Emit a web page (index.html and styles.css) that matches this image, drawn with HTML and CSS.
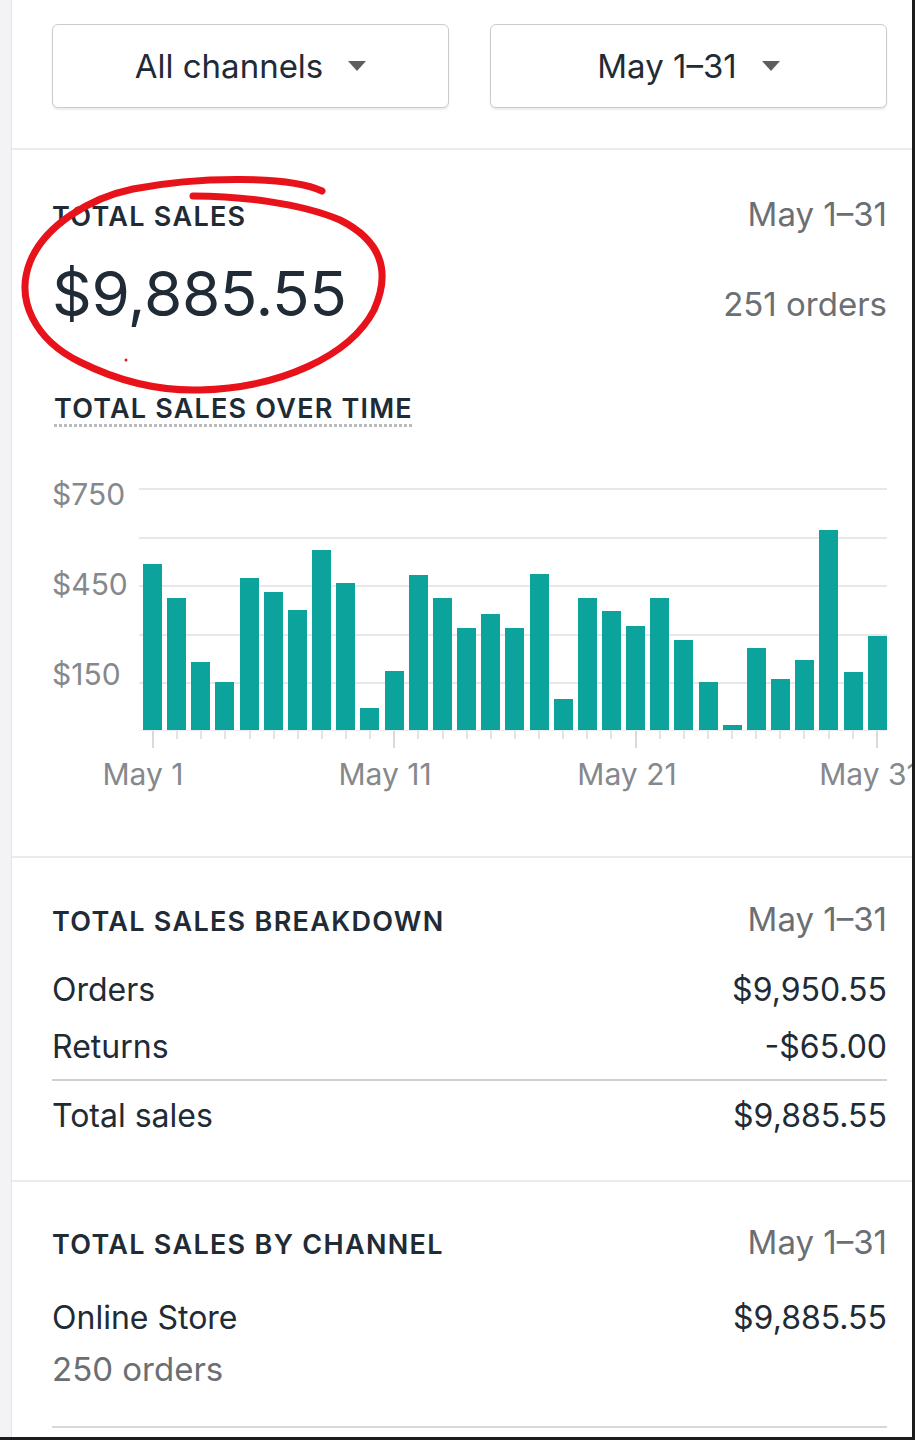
FILE: index.html
```html
<!DOCTYPE html>
<html lang="en">
<head>
<meta charset="utf-8">
<title>Total sales</title>
<link rel="stylesheet" href="styles.css">
</head>
<body>
<div class="frame">
  <div class="panel">
    <section class="filters">
      <button class="dropdown"><span>All channels</span><i class="caret"></i></button>
      <button class="dropdown"><span>May 1–31</span><i class="caret"></i></button>
    </section>

    <section class="card card-total">
      <div class="row head">
        <span class="label">TOTAL SALES</span>
        <span class="muted">May 1–31</span>
      </div>
      <div class="row big-row">
        <span class="big">$9,885.55</span>
        <span class="muted">251 orders</span>
      </div>
      <div class="over-time"><span class="label dotted">TOTAL SALES OVER TIME</span></div>

      <div class="chart">
        <div class="y-axis">
          <span>$750</span>
          <span>$450</span>
          <span>$150</span>
        </div>
        <div class="plot-wrap">
          <div class="plot">
            <div class="bars">
              <i style="height:166px"></i><i style="height:132px"></i><i style="height:68px"></i><i style="height:48px"></i><i style="height:152px"></i><i style="height:138px"></i><i style="height:120px"></i><i style="height:180px"></i><i style="height:147px"></i><i style="height:22px"></i><i style="height:59px"></i><i style="height:155px"></i><i style="height:132px"></i><i style="height:102px"></i><i style="height:116px"></i><i style="height:102px"></i><i style="height:156px"></i><i style="height:31px"></i><i style="height:132px"></i><i style="height:119px"></i><i style="height:104px"></i><i style="height:132px"></i><i style="height:90px"></i><i style="height:48px"></i><i style="height:5px"></i><i style="height:82px"></i><i style="height:51px"></i><i style="height:70px"></i><i style="height:200px"></i><i style="height:58px"></i><i style="height:94px"></i>
            </div>
          </div>
          <div class="ticks">
            <i class="major"></i><i></i><i></i><i></i><i></i><i></i><i></i><i></i><i></i><i></i><i class="major"></i><i></i><i></i><i></i><i></i><i></i><i></i><i></i><i></i><i></i><i class="major"></i><i></i><i></i><i></i><i></i><i></i><i></i><i></i><i></i><i></i><i class="major"></i>
          </div>
          <div class="x-axis">
            <span>May 1</span><span>May 11</span><span>May 21</span><span>May 31</span>
          </div>
        </div>
      </div>
    </section>

    <section class="card card-breakdown">
      <div class="row head">
        <span class="label">TOTAL SALES BREAKDOWN</span>
        <span class="muted">May 1–31</span>
      </div>
      <div class="row line first"><span>Orders</span><span>$9,950.55</span></div>
      <div class="row line"><span>Returns</span><span>-$65.00</span></div>
      <hr class="rule">
      <div class="row line total"><span>Total sales</span><span>$9,885.55</span></div>
    </section>

    <section class="card card-channel">
      <div class="row head">
        <span class="label">TOTAL SALES BY CHANNEL</span>
        <span class="muted">May 1–31</span>
      </div>
      <div class="row line first"><span>Online Store</span><span>$9,885.55</span></div>
      <div class="sub muted">250 orders</div>
      <hr class="rule rule-bottom">
    </section>
  </div>

  <svg class="scribble" width="400" height="230" viewBox="0 170 400 230" aria-hidden="true">
    <path d="M322,191 C290,176 200,176 133,189 C90,198 45,225 30,262 C15,300 35,340 80,362 C120,382 160,391 200,390 C280,388 350,356 374,310 C392,270 380,240 340,220 C300,203 240,196 193,196" fill="none" stroke="#e8121b" stroke-width="7" stroke-linecap="round"/>
    <circle cx="126" cy="360" r="1.5" fill="#e8121b"/>
  </svg>
</div>
</body>
</html>
```

FILE: styles.css
```css
* { box-sizing: border-box; }

html, body {
  margin: 0;
  padding: 0;
  background: #f3f3f5;
}

body {
  font-family: Inter, "Noto Sans", "Liberation Sans", sans-serif;
  color: #212b36;
}

.frame {
  position: relative;
  width: 915px;
  height: 1440px;
  padding-left: 11px;
  border-right: 3px solid #1c1c1c;
  border-bottom: 3px solid #1c1c1c;
  overflow: hidden;
  background: #f3f3f5;
}

.panel {
  height: 100%;
  background: #fff;
  border-left: 1px solid #e3e4e6;
}

/* filters */
.filters {
  display: grid;
  grid-template-columns: 1fr 1fr;
  column-gap: 41px;
  padding: 24px 25px 40px 40px;
  border-bottom: 2px solid #ebebed;
}

.dropdown {
  height: 84px;
  display: flex;
  align-items: center;
  justify-content: center;
  gap: 25px;
  background: #fff;
  border: 1px solid #c9cbce;
  border-radius: 6px;
  box-shadow: 0 2px 2px rgba(0, 0, 0, 0.08);
  font-family: inherit;
  font-size: 33px;
  color: #212b36;
  padding: 0;
}

.caret {
  width: 0;
  height: 0;
  border-left: 9.5px solid transparent;
  border-right: 9.5px solid transparent;
  border-top: 10px solid #5c5f62;
}

/* cards */
.card {
  padding: 0 25px 0 40px;
  border-bottom: 2px solid #ebebed;
}

.row {
  display: flex;
  justify-content: space-between;
  align-items: baseline;
}

.label {
  font-size: 27px;
  font-weight: 600;
  letter-spacing: 1.3px;
  line-height: 34px;
  color: #212b36;
}

.muted {
  color: #6b6f73;
  font-size: 33px;
  line-height: 34px;
}

.head {
  line-height: 34px;
}

.card-total {
  padding-top: 47px;
  padding-bottom: 65px;
}

.big-row {
  margin-top: 24px;
}

.big {
  font-size: 62px;
  line-height: 72px;
  letter-spacing: -0.4px;
  color: #212b36;
}

.over-time {
  margin-top: 62px;
  padding-left: 2px;
}

.dotted {
  display: inline-block;
  letter-spacing: 1.2px;
  padding-bottom: 1px;
  background-image: linear-gradient(to right, #b9bbbe 0 3px, transparent 3px 5px);
  background-size: 5px 3px;
  background-repeat: repeat-x;
  background-position: left bottom;
}

/* chart */
.chart {
  display: grid;
  grid-template-columns: 87px minmax(0, 1fr);
  margin-top: 20px;
}

.y-axis {
  display: flex;
  flex-direction: column;
}

.y-axis span {
  font-size: 30px;
  line-height: 90px;
  color: #85888c;
  margin-top: 2px;
  margin-bottom: -2px;
}

.plot-wrap {
  padding-top: 41px;
  min-width: 0;
}

.plot {
  height: 243px;
  background-image: repeating-linear-gradient(to bottom, #e8e8ea 0 2px, transparent 2px 48.6px);
  border-bottom: 1px solid #ececee;
  padding-left: 4px;
}

.bars {
  height: 100%;
  display: flex;
  justify-content: space-between;
  align-items: flex-end;
}

.bars i {
  display: block;
  width: 19px;
  background: #0ba39c;
}

.ticks {
  display: flex;
  justify-content: space-between;
  padding-left: 13px;
  padding-right: 9px;
  height: 17px;
  align-items: flex-start;
}

.ticks i {
  display: block;
  width: 2px;
  height: 8px;
  background: #e2e3e5;
}

.ticks i.major {
  height: 17px;
  background: #d9dadc;
}

.x-axis {
  display: flex;
  margin-top: 9px;
  margin-left: -117px;
}

.x-axis span {
  flex: 0 0 242px;
  text-align: center;
  font-size: 30px;
  line-height: 34px;
  color: #85888c;
  white-space: nowrap;
}

/* breakdown */
.card-breakdown {
  padding-top: 44px;
  padding-bottom: 44px;
}

.line {
  font-size: 32px;
  line-height: 40px;
  color: #212b36;
}

.line.first {
  margin-top: 31px;
}

.line + .line {
  margin-top: 17px;
}

.rule {
  margin: 12px 0 0;
  border: 0;
  height: 2px;
  background: #cfd1d3;
}

.total {
  margin-top: 15px;
}

.card-channel {
  padding-top: 43px;
  border-bottom: 0;
}

.card-channel .line.first {
  margin-top: 36px;
}

.sub {
  margin-top: 11px;
  line-height: 40px;
}

.rule-bottom {
  margin-top: 37px;
  background: #d6d8da;
}

/* hand-drawn annotation */
.scribble {
  position: absolute;
  left: 0;
  top: 170px;
  pointer-events: none;
}
```
